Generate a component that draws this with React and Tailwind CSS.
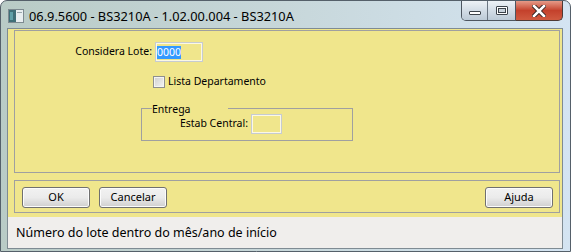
import React from 'react'

const body = { fontFamily: '"Noto Sans", "Liberation Sans", sans-serif' }

// window icon in the title bar
const WinIcon = () => (
  <svg width="16" height="14" viewBox="0 0 16 14">
    <rect x="0.5" y="0.5" width="15" height="13" fill="#e8eef0" stroke="#7d8a90" />
    <rect x="1" y="1" width="7" height="12" fill="#3f6f78" />
    <rect x="2" y="3" width="3" height="8" fill="#5fa0a8" />
    <rect x="9" y="3" width="5" height="1" fill="#9aa7ad" />
  </svg>
)

const CaptionButtons = () => (
  <div className="flex h-[20px]">
    <div className="flex border border-t-0 border-[#4d5660] rounded-bl-[5px] overflow-hidden">
      <div className="w-[26px] h-full flex items-center justify-center bg-gradient-to-b from-[#edf2f6] via-[#d3dde6] to-[#bccad6] border-r border-[#6b7682]">
        <div className="w-[12px] h-[4px] mt-[5px] bg-white border border-[#3c434a] rounded-[1px]" />
      </div>
      <div className="w-[27px] h-full flex items-center justify-center bg-gradient-to-b from-[#edf2f6] via-[#d3dde6] to-[#bccad6]">
        <div className="w-[12px] h-[9px] border border-[#3c434a] bg-white flex items-center justify-center rounded-[1px]">
          <div className="w-[8px] h-[5px] border border-[#3c434a] bg-[#c9d3dc]" />
        </div>
      </div>
    </div>
    <div className="w-[47px] h-full flex items-center justify-center bg-gradient-to-b from-[#e59a88] via-[#c4412c] to-[#d05a40] border border-t-0 border-l-0 border-[#4d3a36] rounded-br-[5px]">
      <svg width="14" height="12" viewBox="0 0 14 12">
        <path d="M2 1 L12 11 M12 1 L2 11" stroke="#3a2a28" strokeWidth="4.5" strokeLinecap="square" />
        <path d="M2 1 L12 11 M12 1 L2 11" stroke="#ffffff" strokeWidth="2.5" strokeLinecap="square" />
      </svg>
    </div>
  </div>
)

const WinButton = ({ children }) => (
  <button className="w-[68px] h-[21px] rounded-[3px] border border-[#707070] bg-gradient-to-b from-[#f2f2f2] via-[#ebebeb] to-[#cfcfcf] text-[11px] text-black shadow-[inset_0_0_0_1px_#fcfcfc]">
    {children}
  </button>
)

export default function App() {
  return (
    <div className="w-[571px] h-[252px] flex flex-col bg-gradient-to-r from-[#b9cbc6] via-[#c7d7da] to-[#d4e4f2] border border-[#55606a] rounded-t-[7px] overflow-hidden" style={body}>
      {/* Title bar */}
      <div className="h-[27px] flex items-start justify-between pl-[7px] pr-[7px]">
        <div className="flex items-center gap-[5px] pt-[8px]">
          <WinIcon />
          <span className="text-[12.8px] text-black leading-none">06.9.5600 - BS3210A - 1.02.00.004 - BS3210A</span>
        </div>
        <CaptionButtons />
      </div>

      {/* Client area */}
      <div className="ml-[6px] mr-[7px] h-[221px] border border-[#7f8b93] bg-[#f0e68c] flex flex-col">
        {/* main box */}
        <div className="ml-[6px] mr-[2px] mt-[1px] h-[143px] border border-[#a0a0a0] flex flex-col text-[10.5px] text-black">
          <div className="flex items-center mt-[11px]">
            <span className="w-[137px] text-right">Considera Lote:</span>
            <div className="ml-[3px] w-[48px] h-[20px] border border-[#c6cbd1] shadow-[inset_0_0_0_1px_#fbf8e6] flex items-center px-[1px]">
              <span className="bg-[#3399ff] text-white leading-[13px]">0000</span>
            </div>
          </div>
          <div className="flex items-center mt-[12px] ml-[138px] gap-[3px]">
            <div className="w-[12px] h-[12px] border border-[#8e8f8f] bg-gradient-to-br from-[#cfcfcf] to-[#f4f4f4] shadow-[inset_0_0_0_1px_#f4f4f4]" />
            <span>Lista Departamento</span>
          </div>
          <fieldset className="ml-[126px] mt-[13px] w-[212px] h-[38px] border border-[#a0a0a0]">
            <legend className="ml-[10px] w-[76px] leading-[12px]">Entrega</legend>
            <div className="flex items-center -mt-[1px]">
              <span className="w-[106px] text-right">Estab Central:</span>
              <div className="ml-[3px] w-[31px] h-[20px] border border-[#c6cbd1] shadow-[inset_0_0_0_1px_#fbf8e6]" />
            </div>
          </fieldset>
        </div>

        {/* button box */}
        <div className="ml-[6px] mr-[2px] mt-[7px] h-[33px] border border-[#a0a0a0] flex items-start justify-between pl-[7px] pr-[6px] pt-[6px]">
          <div className="flex gap-[9px]">
            <WinButton>OK</WinButton>
            <WinButton>Cancelar</WinButton>
          </div>
          <WinButton>Ajuda</WinButton>
        </div>

        {/* status bar */}
        <div className="mt-[4px] flex-1 bg-[#f0eeec] flex items-center pl-[8px] text-[12.5px] text-black pt-[1px]">
          Número do lote dentro do mês/ano de início
        </div>
      </div>
    </div>
  )
}
